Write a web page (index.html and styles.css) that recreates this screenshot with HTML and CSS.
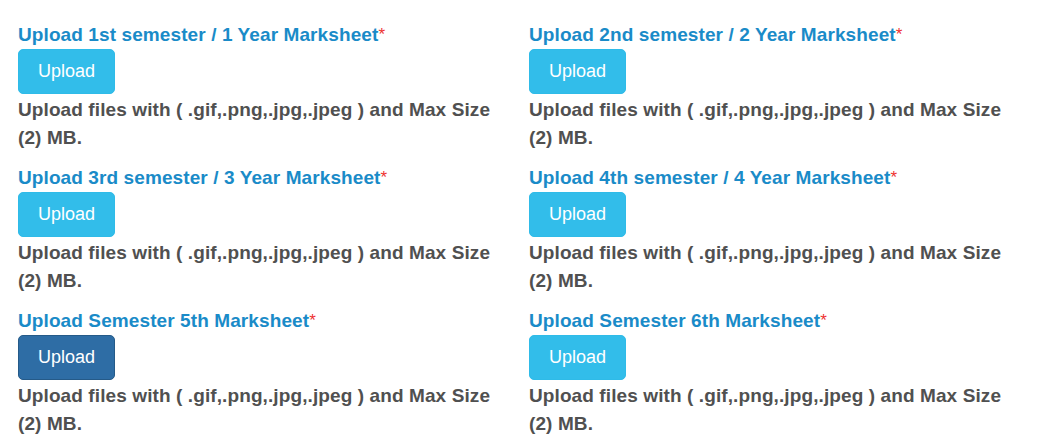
FILE: index.html
```html
<!DOCTYPE html>
<html>
<head>
<meta charset="utf-8">
<link rel="stylesheet" href="styles.css">
</head>
<body>
<div class="grid">
  <div class="field">
    <label class="label">Upload 1st semester / 1 Year Marksheet<span class="req">*</span></label>
    <button class="btn">Upload</button>
    <p class="help">Upload files with ( .gif,.png,.jpg,.jpeg ) and Max Size (2) MB.</p>
  </div>
  <div class="field">
    <label class="label">Upload 2nd semester / 2 Year Marksheet<span class="req">*</span></label>
    <button class="btn">Upload</button>
    <p class="help">Upload files with ( .gif,.png,.jpg,.jpeg ) and Max Size (2) MB.</p>
  </div>
  <div class="field">
    <label class="label">Upload 3rd semester / 3 Year Marksheet<span class="req">*</span></label>
    <button class="btn">Upload</button>
    <p class="help">Upload files with ( .gif,.png,.jpg,.jpeg ) and Max Size (2) MB.</p>
  </div>
  <div class="field">
    <label class="label">Upload 4th semester / 4 Year Marksheet<span class="req">*</span></label>
    <button class="btn">Upload</button>
    <p class="help">Upload files with ( .gif,.png,.jpg,.jpeg ) and Max Size (2) MB.</p>
  </div>
  <div class="field">
    <label class="label">Upload Semester 5th Marksheet<span class="req">*</span></label>
    <button class="btn btn-active">Upload</button>
    <p class="help">Upload files with ( .gif,.png,.jpg,.jpeg ) and Max Size (2) MB.</p>
  </div>
  <div class="field">
    <label class="label">Upload Semester 6th Marksheet<span class="req">*</span></label>
    <button class="btn">Upload</button>
    <p class="help">Upload files with ( .gif,.png,.jpg,.jpeg ) and Max Size (2) MB.</p>
  </div>
</div>
</body>
</html>
```
FILE: styles.css
```css
html, body {
  margin: 0;
  padding: 0;
  background: #ffffff;
}
body {
  font-family: "Liberation Sans", Arial, sans-serif;
  font-size: 19px;
}
.grid {
  display: grid;
  grid-template-columns: 481px 481px;
  column-gap: 30px;
  row-gap: 16px;
  padding: 25px 0 0 18px;
}
.field {
  display: flex;
  flex-direction: column;
  align-items: flex-start;
}
.label {
  display: block;
  height: 20px;
  font-weight: bold;
  font-size: 19px;
  line-height: 20px;
  letter-spacing: 0.1px;
  color: #1a8bc8;
  margin-bottom: 4px;
  white-space: nowrap;
}
.req {
  color: #ee3333;
  font-weight: normal;
  font-size: 17px;
  line-height: 0;
  vertical-align: 1px;
}
.btn {
  box-sizing: border-box;
  width: 97px;
  height: 45px;
  margin: 0;
  padding: 0;
  border: 1px solid #2fbbe8;
  border-radius: 5px;
  background: #32bdea;
  color: #ffffff;
  font-family: "Liberation Sans", Arial, sans-serif;
  font-size: 18px;
  line-height: 43px;
  text-align: center;
}
.btn-active {
  background: #2e6da5;
  border-color: #255a88;
}
.help {
  margin: 2px 0 0 0;
  font-weight: bold;
  font-size: 19px;
  line-height: 28px;
  letter-spacing: 0.1px;
  color: #505050;
}
```
